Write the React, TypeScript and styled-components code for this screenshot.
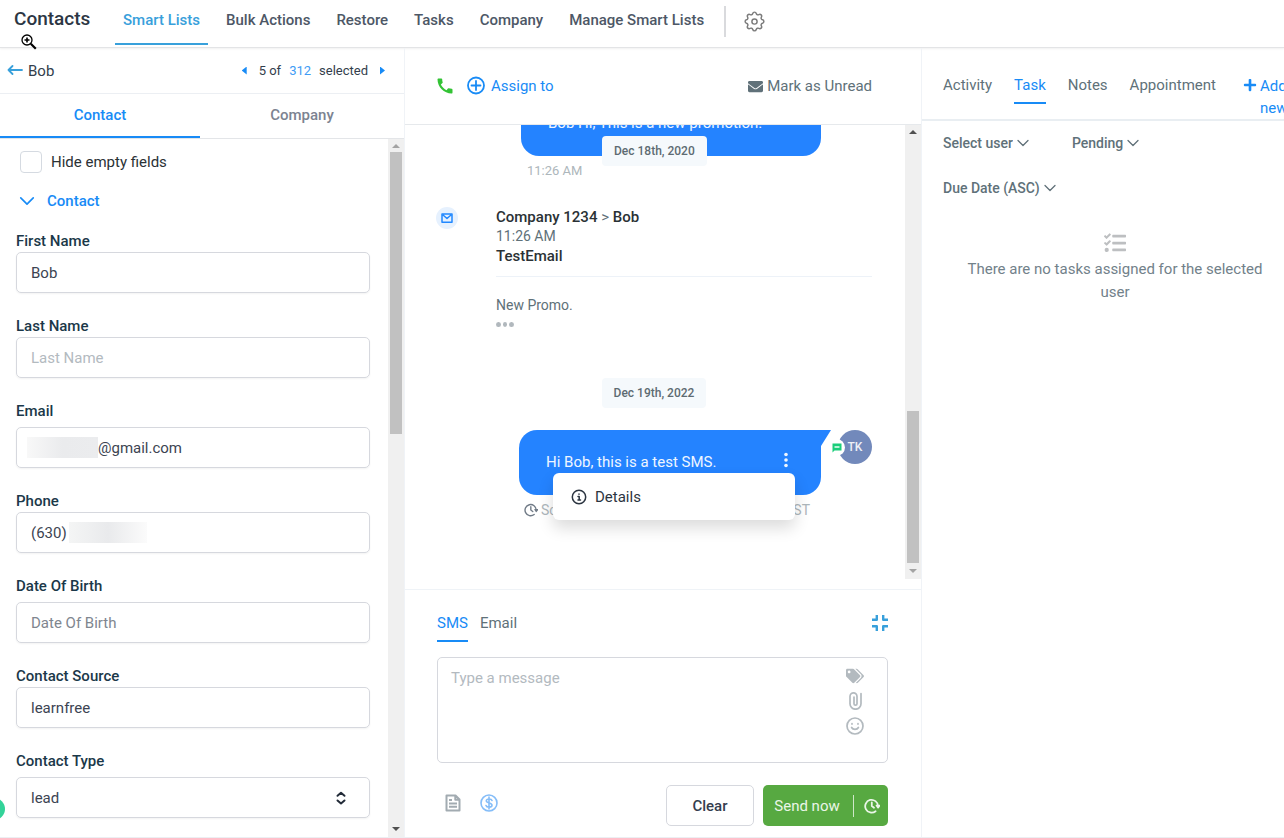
import React from "react";
import styled, { createGlobalStyle, css } from "styled-components";
import { FaEnvelope, FaPlus, FaTags, FaTasks } from "react-icons/fa";
import { MdCall } from "react-icons/md";

const blue = "#188bf6";
const sky = "#38a0db";
const slate = "#607179";
const line = "#eceff3";

const GlobalStyle = createGlobalStyle`
  *, *::before, *::after { box-sizing: border-box; }
  body {
    margin: 0;
    background: #fff;
    color: #2a3135;
    font-family: Roboto, "Liberation Sans", sans-serif;
    font-size: 15px;
    line-height: 20px;
  }
  button, input, select, textarea { font: inherit; color: inherit; }
  button { padding: 0; border: 0; background: none; cursor: pointer; }
  a { color: inherit; text-decoration: none; }
  h1, h2, p { margin: 0; }
  svg { display: block; flex: none; }
`;

const Page = styled.div`
  display: flex;
  flex-direction: column;
  height: 100vh;
  overflow: hidden;
`;

/* Top navigation */
const TopBar = styled.header`
  display: flex;
  align-items: center;
  flex: none;
  height: 48px;
  padding-left: 14px;
  border-bottom: 1px solid #e3e4e6;
  box-shadow: 0 1px 2px rgba(0, 0, 0, 0.06);
`;
const Brand = styled.h1`
  width: 101px;
  padding-bottom: 9px;
  font-size: 19px;
  line-height: 24px;
  font-weight: 500;
  color: #2c3644;
`;
const TopNav = styled.nav`
  display: flex;
  align-self: stretch;
  gap: 10px;
`;
const NavLink = styled.a<{ $active?: boolean }>`
  height: 45px;
  padding: 10px 8px 0;
  font-weight: 500;
  color: ${(p) => (p.$active ? sky : "#4d5766")};
  border-bottom: 2px solid ${(p) => (p.$active ? sky : "transparent")};
`;
const SettingsButton = styled.button`
  display: flex;
  align-items: center;
  height: 31px;
  margin: 0 0 5px 12px;
  padding-left: 16px;
  border-left: 2px solid #d9dadd;
  color: #7b7b7b;
`;

/* Columns */
const Columns = styled.main`
  display: grid;
  grid-template-columns: 404px minmax(0, 1fr) 363px;
  flex: 1;
  min-height: 0;
  border-bottom: 1px solid ${line};
`;
const Column = styled.section`
  display: flex;
  flex-direction: column;
  min-width: 0;
  min-height: 0;
  overflow: hidden;
  & + & { border-left: 1px solid #f0f3f7; }
`;

const ScrollTrack = styled.div`
  display: flex;
  flex-direction: column;
  align-items: center;
  flex: none;
  width: 16px;
  background: #f0f0f0;
`;
const Arrow = styled.i<{ $down?: boolean; $dim?: boolean }>`
  margin: ${(p) => (p.$down ? "6px 0" : "5px 0 4px")};
  border: 4px solid transparent;
  ${(p) => {
    const color = p.$dim ? "#a3a3a3" : "#505050";
    return p.$down
      ? css`border-top-color: ${color}; border-bottom: 0;`
      : css`border-bottom-color: ${color}; border-top: 0;`;
  }}
`;
const Spacer = styled.div<{ $grow: number }>`
  flex: ${(p) => p.$grow} 1 0;
`;
const Thumb = styled(Spacer)`
  width: 12px;
  background: #c1c1c1;
`;

/* Contact details */
const ContactBar = styled.div`
  display: flex;
  align-items: center;
  justify-content: space-between;
  flex: none;
  height: 46px;
  padding: 0 19px 0 7px;
  border-bottom: 1px solid ${line};
  color: #333e4c;
`;
const BackButton = styled.button`
  display: flex;
  align-items: center;
  gap: 5px;
`;
const Pager = styled.div`
  display: flex;
  align-items: center;
  font-size: 13px;
  gap: 8px;
`;
const PagerButton = styled.button<{ $next?: boolean }>`
  width: 5px;
  height: 8px;
  margin: ${(p) => (p.$next ? "0 0 0 4px" : "0 4px 0 0")};
  background: ${blue};
  clip-path: ${(p) =>
    p.$next ? "polygon(0 0, 100% 50%, 0 100%)" : "polygon(100% 0, 0 50%, 100% 100%)"};
`;
const Count = styled.span`
  color: #3f9cf5;
`;
const PanelTabs = styled.div`
  display: grid;
  grid-template-columns: 200px 1fr;
  flex: none;
  height: 45px;
  border-bottom: 1px solid #e3e5e8;
`;
const PanelTab = styled.button<{ $active?: boolean }>`
  font-weight: 500;
  color: ${(p) => (p.$active ? blue : "#7c8391")};
  border-bottom: 2px solid ${(p) => (p.$active ? blue : "transparent")};
`;
const ScrollRow = styled.div`
  display: flex;
  flex: 1;
  min-height: 0;
`;
const Fields = styled.form`
  flex: 1;
  min-width: 0;
  padding: 12px 18px 0 16px;
  overflow: hidden;
`;
const CheckRow = styled.label`
  display: flex;
  align-items: center;
  gap: 9px;
  padding-left: 4px;
  height: 21px;
`;
const CheckBox = styled.input`
  appearance: none;
  width: 22px;
  height: 22px;
  margin: 0;
  border: 1px solid #d5dae1;
  border-radius: 4px;
`;
const SectionToggle = styled.button`
  display: flex;
  align-items: center;
  gap: 12px;
  margin: 19px 0 20px 3px;
  font-weight: 500;
  color: ${blue};
`;
const Field = styled.div<{ $loose?: boolean }>`
  display: flex;
  flex-direction: column;
  gap: ${(p) => (p.$loose ? 6 : 1)}px;
  margin-bottom: 23px;
`;
const FieldLabel = styled.label`
  font-weight: 500;
  color: #1b3849;
`;
const FieldBox = styled.div`
  display: flex;
  align-items: center;
  height: 41px;
  padding: 0 14px;
  border: 1px solid #d6d8de;
  border-radius: 5px;
  box-shadow: 0 1px 2px rgba(0, 0, 0, 0.05);
  color: #3c4452;
`;
const FieldInput = styled.input<{ $tone?: string }>`
  flex: 1;
  min-width: 0;
  padding: 0;
  border: 0;
  outline: 0;
  background: none;
  &::placeholder { color: ${(p) => p.$tone ?? "#b3babf"}; opacity: 1; }
`;
const AreaCode = styled(FieldInput)`
  flex: none;
  width: 38px;
`;
const FieldSelect = styled.select`
  flex: 1;
  appearance: none;
  padding: 0;
  border: 0;
  background: none;
`;
const Redacted = styled.span<{ $end?: boolean }>`
  width: ${(p) => (p.$end ? 78 : 71)}px;
  height: 21px;
  margin-left: ${(p) => (p.$end ? 0 : -4)}px;
  background: ${(p) =>
    p.$end
      ? "linear-gradient(90deg, #f4f5f5, #e9eaec 50%, #fbfbfb)"
      : "linear-gradient(90deg, #f8f8f8, #eaebed 50%, #ebecee)"};
`;
const SortMark = styled.span`
  margin-right: 8px;
  color: #222b38;
`;

/* Conversation */
const ConversationBar = styled.div`
  display: flex;
  align-items: center;
  flex: none;
  height: 77px;
  padding: 0 49px 0 30px;
  border-bottom: 1px solid #e6e9ec;
`;
const CallButton = styled.button`
  margin-right: 11px;
  color: #33c335;
`;
const AssignButton = styled.button`
  display: flex;
  align-items: center;
  gap: 5px;
  color: ${blue};
`;
const UnreadButton = styled.button`
  display: flex;
  align-items: center;
  gap: 4px;
  margin-left: auto;
  color: ${slate};
`;
const Thread = styled.div`
  display: flex;
  flex-direction: column;
  justify-content: flex-end;
  flex: 1;
  min-width: 0;
  padding: 0 33px 59px 31px;
  overflow: hidden;
`;
const Outgoing = styled.div<{ $width: number }>`
  position: relative;
  align-self: flex-end;
  flex: none;
  width: ${(p) => p.$width}px;
  margin-right: 51px;
`;
const Bubble = styled.div`
  display: flex;
  align-items: center;
  justify-content: space-between;
  height: 65px;
  padding: 0 32px 2px 27px;
  border-radius: 18px;
  background: #2483ff;
  color: #eff6ff;
`;
const TailBubble = styled(Bubble)`
  border-top-right-radius: 0;
  &::after {
    content: "";
    position: absolute;
    top: 0;
    left: 100%;
    width: 10px;
    height: 16px;
    background: #2483ff;
    clip-path: polygon(0 0, 100% 0, 0 100%);
  }
`;
const Time = styled.time`
  font-size: 14px;
  line-height: 19px;
  color: ${slate};
`;
const SentTime = styled.time`
  display: block;
  margin: 5px 0 0 6px;
  font-size: 13px;
  color: #adb6bb;
`;
const DateChip = styled.time`
  align-self: center;
  flex: none;
  padding: 5px 12px;
  border-radius: 4px;
  background: #f5f9fc;
  font-size: 12px;
  font-weight: 500;
  color: #5d6b72;
`;
const FloatingDate = styled.div`
  position: absolute;
  top: 45px;
  left: 81px;
  display: flex;
`;
const EmailEntry = styled.article`
  display: flex;
  flex: none;
  align-items: flex-start;
  gap: 38px;
  margin: 26px 0 51px;
`;
const MailBadge = styled.span`
  display: grid;
  place-items: center;
  width: 22px;
  height: 22px;
  border-radius: 50%;
  background: #e6f1fe;
  color: #2188ff;
`;
const EmailBody = styled.div`
  flex: 1;
  display: flex;
  flex-direction: column;
  color: ${slate};
`;
const Strong = styled.strong`
  font-weight: 500;
  color: #2a3135;
`;
const EmailHead = styled.header`
  display: flex;
  flex-direction: column;
  padding-bottom: 10px;
  margin-bottom: 18px;
  border-bottom: 1px solid #edf2f8;
`;
const EmailText = styled.p`
  font-size: 14px;
`;
const MoreDots = styled.button`
  display: flex;
  gap: 2px;
  margin-top: 7px;
  width: 18px;
`;
const Dot = styled.i`
  width: 5px;
  height: 5px;
  border-radius: 50%;
  background: #b1b8bd;
`;
const SmsEntry = styled(Outgoing)`
  margin-top: 22px;
`;
const BubbleMenuButton = styled.button`
  padding-bottom: 4px;
`;
const Menu = styled.div`
  position: absolute;
  top: 43px;
  left: 34px;
  width: 242px;
  border-radius: 6px;
  background: #fff;
  box-shadow: 0 8px 16px rgba(0, 0, 0, 0.14);
`;
const MenuItem = styled.button`
  display: flex;
  align-items: center;
  gap: 8px;
  width: 100%;
  height: 47px;
  padding-left: 18px;
  color: #2b3440;
`;
const Status = styled.div`
  display: flex;
  align-items: center;
  gap: 3px;
  height: 20px;
  margin-top: 5px;
  padding: 0 11px 0 5px;
  font-size: 14px;
  color: #adb6bb;
`;
const StatusIcon = styled.span`
  color: #717b87;
`;
const Zone = styled.span`
  margin-left: auto;
`;
const Avatar = styled.div`
  position: absolute;
  top: 0;
  left: calc(100% + 17px);
  display: grid;
  place-items: center;
  width: 34px;
  height: 34px;
  border-radius: 50%;
  background: #7289bb;
  color: #eef1f7;
  font-size: 12px;
  font-weight: 500;
`;
const Channel = styled.span`
  position: absolute;
  top: 9px;
  left: -10px;
  display: grid;
  place-items: center;
  width: 17px;
  height: 17px;
  border-radius: 50%;
  background: #fff;
`;

/* Composer */
const Composer = styled.form`
  display: flex;
  flex-direction: column;
  flex: none;
  margin-top: 10px;
  padding: 23px 33px 11px 32px;
  border-top: 1px solid #eff3f7;
`;
const ComposerTop = styled.div`
  display: flex;
  gap: 12px;
`;
const LineTab = styled.button<{ $active?: boolean }>`
  height: 29px;
  padding-bottom: 8px;
  color: ${(p) => (p.$active ? blue : slate)};
  border-bottom: 2px solid ${(p) => (p.$active ? blue : "transparent")};
`;
const Shrink = styled.button`
  margin: 0 0 10px auto;
  color: ${sky};
`;
const MessageBox = styled.div`
  display: flex;
  height: 106px;
  margin: 15px 0 22px;
  border: 1px solid #d6d8de;
  border-radius: 5px;
`;
const Message = styled.textarea`
  flex: 1;
  padding: 10px 13px;
  border: 0;
  outline: 0;
  resize: none;
  background: none;
  &::placeholder { color: #b3babf; opacity: 1; }
`;
const MessageTools = styled.div`
  display: flex;
  flex-direction: column;
  align-items: center;
  gap: 7px;
  width: 34px;
  margin-right: 15px;
  padding-top: 9px;
  color: #b3babf;
`;
const ComposerActions = styled.div`
  display: flex;
  align-items: center;
  gap: 9px;
`;
const Extras = styled.div`
  display: flex;
  gap: 18px;
  margin: 0 auto 6px 7px;
  color: #a2abb1;
`;
const ClearButton = styled.button`
  width: 88px;
  height: 41px;
  border: 1px solid #d6d8de;
  border-radius: 5px;
  font-weight: 500;
  color: #343d4e;
`;
const SendGroup = styled.div`
  display: flex;
  align-items: center;
  width: 125px;
  height: 41px;
  border-radius: 5px;
  background: #57a941;
  color: #eaf6e7;
`;
const SendButton = styled.button`
  width: 91px;
  height: 22px;
  padding-right: 2px;
  border-right: 1px solid #cfe7c9;
`;
const ScheduleButton = styled.button`
  margin-left: 10px;
`;

/* Tasks */
const TaskTabs = styled.div`
  display: flex;
  align-items: flex-start;
  flex: none;
  gap: 22px;
  height: 73px;
  padding: 27px 0 0 21px;
  border-bottom: 2px solid #e9eef2;
`;
const AddButton = styled.button`
  display: flex;
  flex: none;
  gap: 3px;
  margin-left: 5px;
  color: ${blue};
  text-align: left;
  line-height: 22px;
`;
const AddIcon = styled.span`
  padding-top: 3px;
`;
const AddLabel = styled.span`
  width: 30px;
`;
const Filters = styled.div`
  display: flex;
  flex-wrap: wrap;
  gap: 25px 43px;
  padding: 12px 21px 0;
  color: ${slate};
`;
const Filter = styled.label`
  display: flex;
  align-items: center;
  gap: 4px;
`;
const FilterSelect = styled.select`
  appearance: none;
  field-sizing: content;
  height: 20px;
  padding: 0;
  border: 0;
  background: none;
  font-size: 14px;
  font-weight: 500;
`;
const Empty = styled.div`
  display: flex;
  flex-direction: column;
  align-items: center;
  gap: 4px;
  margin: 34px 14px 0 38px;
  text-align: center;
  line-height: 23px;
  color: #72818a;
`;

/* Overlays */
const HelpDot = styled.button`
  position: fixed;
  left: -17px;
  bottom: 18px;
  width: 22px;
  height: 22px;
  border-radius: 50%;
  background: #33d399;
`;
const Lens = styled.svg`
  position: absolute;
  top: 33px;
  left: 20px;
`;

const Chevron = ({ w = 12, stroke = 1.3 }: { w?: number; stroke?: number }) => (
  <svg width={w} height={w / 2 + 2} viewBox="0 0 12 8" fill="none" stroke="currentColor" strokeWidth={stroke} strokeLinecap="round" strokeLinejoin="round">
    <path d="M1 1.5 6 6.5 11 1.5" />
  </svg>
);

const Clock = ({ size, stroke }: { size: number; stroke: number }) => (
  <svg width={size} height={size} viewBox="0 0 16 16" fill="none" stroke="currentColor" strokeWidth={stroke} strokeLinecap="round" strokeLinejoin="round">
    <path d="M11.6 13.2A6.4 6.4 0 1 1 14 8" />
    <path d="M7.8 4.3V8l2.2 1.7" />
    <path d="M12.6 7.6h3L14 9.6z" fill="currentColor" />
  </svg>
);

type FieldProps = {
  id: string;
  label: string;
  value?: string;
  loose?: boolean;
  tone?: string;
  children?: React.ReactNode;
};
const TextField = ({ id, label, value, loose, tone, children }: FieldProps) => (
  <Field $loose={loose}>
    <FieldLabel htmlFor={id}>{label}</FieldLabel>
    <FieldBox>
      {children ?? <FieldInput id={id} defaultValue={value} placeholder={value ? undefined : label} $tone={tone} />}
    </FieldBox>
  </Field>
);

const TaskFilter = ({ label }: { label: string }) => (
  <Filter>
    <FilterSelect aria-label={label}>
      <option>{label}</option>
    </FilterSelect>
    <Chevron />
  </Filter>
);

const navItems = ["Smart Lists", "Bulk Actions", "Restore", "Tasks", "Company", "Manage Smart Lists"];
const taskTabs = ["Activity", "Task", "Notes", "Appointment"];

export default function App() {
  return (
    <Page>
      <GlobalStyle />
      <TopBar>
        <Brand>Contacts</Brand>
        <TopNav>
          {navItems.map((item, i) => (
            <NavLink key={item} href="#" $active={i === 0}>{item}</NavLink>
          ))}
        </TopNav>
        <SettingsButton aria-label="Settings">
          <svg width="25" height="25" viewBox="0 0 24 24" fill="none" stroke="currentColor" strokeWidth="1.4" strokeLinejoin="round">
            <path d="M10.325 4.317c.426-1.756 2.924-1.756 3.35 0a1.724 1.724 0 0 0 2.573 1.066c1.543-.94 3.31.826 2.37 2.37a1.724 1.724 0 0 0 1.065 2.572c1.756.426 1.756 2.924 0 3.35a1.724 1.724 0 0 0-1.066 2.573c.94 1.543-.826 3.31-2.37 2.37a1.724 1.724 0 0 0-2.572 1.065c-.426 1.756-2.924 1.756-3.35 0a1.724 1.724 0 0 0-2.573-1.066c-1.543.94-3.31-.826-2.37-2.37a1.724 1.724 0 0 0-1.065-2.572c-1.756-.426-1.756-2.924 0-3.35a1.724 1.724 0 0 0 1.066-2.573c-.94-1.543.826-3.31 2.37-2.37.996.608 2.296.07 2.572-1.065z" />
            <circle cx="12" cy="12" r="2.5" />
          </svg>
        </SettingsButton>
      </TopBar>

      <Columns>
        <Column>
          <ContactBar>
            <BackButton>
              <svg width="16" height="12" viewBox="0 0 16 12" fill="none" stroke={sky} strokeWidth="1.8" strokeLinecap="round" strokeLinejoin="round">
                <path d="M15 5H1.5M5.5 1l-4 4 4 4" />
              </svg>
              Bob
            </BackButton>
            <Pager>
              <PagerButton aria-label="Previous contact" />
              <span>5 of</span>
              <Count>312</Count>
              <span>selected</span>
              <PagerButton $next aria-label="Next contact" />
            </Pager>
          </ContactBar>
          <PanelTabs>
            <PanelTab $active>Contact</PanelTab>
            <PanelTab>Company</PanelTab>
          </PanelTabs>
          <ScrollRow>
            <Fields>
              <CheckRow>
                <CheckBox type="checkbox" />
                Hide empty fields
              </CheckRow>
              <SectionToggle type="button">
                <Chevron w={16} stroke={1.3} />
                Contact
              </SectionToggle>
              <TextField id="first" label="First Name" value="Bob" />
              <TextField id="last" label="Last Name" />
              <TextField id="email" label="Email" loose>
                <Redacted />
                <FieldInput id="email" defaultValue="@gmail.com" />
              </TextField>
              <TextField id="phone" label="Phone">
                <AreaCode id="phone" defaultValue="(630)" />
                <Redacted $end />
              </TextField>
              <TextField id="birth" label="Date Of Birth" loose tone="#80868f" />
              <TextField id="source" label="Contact Source" value="learnfree" />
              <TextField id="type" label="Contact Type" loose>
                <FieldSelect id="type">
                  <option>lead</option>
                </FieldSelect>
                <SortMark>
                  <svg width="12" height="14" viewBox="0 0 12 14" fill="none" stroke="currentColor" strokeWidth="2" strokeLinecap="round" strokeLinejoin="round">
                    <path d="M2.5 4.8 6 1.8l3.5 3M2.5 9.5 6 12.5l3.5-3" />
                  </svg>
                </SortMark>
              </TextField>
            </Fields>
            <ScrollTrack>
              <Arrow $dim />
              <Thumb $grow={282} />
              <Spacer $grow={388} />
              <Arrow $down />
            </ScrollTrack>
          </ScrollRow>
        </Column>

        <Column>
          <ConversationBar>
            <CallButton aria-label="Call">
              <MdCall size={20} />
            </CallButton>
            <AssignButton>
              <svg width="20" height="20" viewBox="0 0 20 20" fill="none" stroke="currentColor" strokeWidth="1.8" strokeLinecap="round">
                <circle cx="10" cy="9.5" r="8" />
                <path d="M10 5v9M5.5 9.5h9" />
              </svg>
              Assign to
            </AssignButton>
            <UnreadButton>
              <FaEnvelope size={15} />
              Mark as Unread
            </UnreadButton>
          </ConversationBar>
          <ScrollRow>
            <Thread>
              <Outgoing $width={300}>
                <Bubble>Bob Hi, This is a new promotion.</Bubble>
                <FloatingDate>
                  <DateChip>Dec 18th, 2020</DateChip>
                </FloatingDate>
                <SentTime>11:26 AM</SentTime>
              </Outgoing>
              <EmailEntry>
                <MailBadge>
                  <svg width="12" height="10" viewBox="0 0 12 10" fill="none" stroke="currentColor" strokeWidth="1.5" strokeLinejoin="round">
                    <path d="M1 1h10v8.2H1zM2 2l4 3.5L10 2" />
                  </svg>
                </MailBadge>
                <EmailBody>
                  <EmailHead>
                    <span><Strong>Company 1234</Strong> &gt; <Strong>Bob</Strong></span>
                    <Time>11:26 AM</Time>
                    <Strong>TestEmail</Strong>
                  </EmailHead>
                  <EmailText>New Promo.</EmailText>
                  <MoreDots aria-label="Show more">
                    <Dot />
                    <Dot />
                    <Dot />
                  </MoreDots>
                </EmailBody>
              </EmailEntry>
              <DateChip>Dec 19th, 2022</DateChip>
              <SmsEntry $width={302}>
                <TailBubble>
                  Hi Bob, this is a test SMS.
                  <BubbleMenuButton aria-label="Message options">
                    <svg width="6" height="16" viewBox="0 0 6 16" fill="currentColor">
                      <circle cx="3" cy="2.5" r="1.8" />
                      <circle cx="3" cy="8" r="1.8" />
                      <circle cx="3" cy="13.5" r="1.8" />
                    </svg>
                  </BubbleMenuButton>
                </TailBubble>
                <Status>
                  <StatusIcon>
                    <Clock size={14} stroke={1.6} />
                  </StatusIcon>
                  <span>Scheduled</span>
                  <Zone>EST</Zone>
                </Status>
                <Menu>
                  <MenuItem>
                    <svg width="16" height="16" viewBox="0 0 16 16" fill="none" stroke="currentColor" strokeWidth="1.5" strokeLinecap="round" strokeLinejoin="round">
                      <circle cx="8" cy="8" r="6.7" />
                      <path d="M7 7.5h1.2v3.2M7 10.9h2.5M8 5v.2" />
                    </svg>
                    Details
                  </MenuItem>
                </Menu>
                <Avatar>
                  TK
                  <Channel>
                    <svg width="10" height="10" viewBox="0 0 9 10">
                      <path d="M0 .5h9v7H2L0 9.5z" fill="#1bce7b" />
                      <path d="M2 3h5v2H2z" fill="#b9f2d7" />
                    </svg>
                  </Channel>
                </Avatar>
              </SmsEntry>
            </Thread>
            <ScrollTrack>
              <Arrow />
              <Spacer $grow={271} />
              <Thumb $grow={151} />
              <Arrow $down $dim />
            </ScrollTrack>
          </ScrollRow>
          <Composer>
            <ComposerTop>
              <LineTab type="button" $active>SMS</LineTab>
              <LineTab type="button">Email</LineTab>
              <Shrink type="button" aria-label="Collapse">
                <svg width="16" height="16" viewBox="0 0 16 16" fill="none" stroke="currentColor" strokeWidth="2.4" strokeLinejoin="round">
                  <path d="M4.8 0v4.8H0M11.2 0v4.8H16M4.8 16v-4.8H0M11.2 16v-4.8H16" />
                </svg>
              </Shrink>
            </ComposerTop>
            <MessageBox>
              <Message aria-label="Message" placeholder="Type a message" />
              <MessageTools>
                <button type="button" aria-label="Tags"><FaTags size={18} /></button>
                <button type="button" aria-label="Attach">
                  <svg width="13" height="18" viewBox="0 0 13 18" fill="none" stroke="currentColor" strokeWidth="1.7" strokeLinecap="round">
                    <path d="M12 1.5v10.2a5.5 5.5 0 0 1-11 0V4.400a3.500 3.500 0 0 1 7 0v7.300a1.500 1.500 0 0 1-3 0V5" />
                  </svg>
                </button>
                <button type="button" aria-label="Emoji">
                  <svg width="18" height="18" viewBox="0 0 18 18" fill="none" stroke="currentColor" strokeWidth="1.7" strokeLinecap="round">
                    <circle cx="9" cy="9" r="8" />
                    <path d="M5.6 10.5c1.3 2.6 5.5 2.6 6.8 0M6 6.7v.4M12 6.7v.4" />
                  </svg>
                </button>
              </MessageTools>
            </MessageBox>
            <ComposerActions>
              <Extras>
                <button type="button" aria-label="Templates">
                  <svg width="18" height="18" viewBox="0 0 18 18" fill="none" stroke="currentColor" strokeWidth="2" strokeLinejoin="round">
                    <path d="M2.5 1.5h9l4 4v11h-13zM11.3 1.7v4h4M5 6h3M5 9.5h8M5 12.8h8" />
                  </svg>
                </button>
                <button type="button" aria-label="Request payment">
                  <svg width="18" height="18" viewBox="0 0 18 18" fill="none" stroke="#85bdf8" strokeWidth="1.6" strokeLinecap="round">
                    <circle cx="9" cy="9" r="8" />
                    <path d="M12 6.5C11.4 4.5 6.5 4.3 6.3 6.8c0 2.7 5.7 1.6 5.7 4.4 0 2.6-5.3 2.5-6 .3M9 3v12" />
                  </svg>
                </button>
              </Extras>
              <ClearButton type="button">Clear</ClearButton>
              <SendGroup>
                <SendButton type="button">Send now</SendButton>
                <ScheduleButton type="button" aria-label="Schedule send">
                  <Clock size={16} stroke={1.8} />
                </ScheduleButton>
              </SendGroup>
            </ComposerActions>
          </Composer>
        </Column>

        <Column>
          <TaskTabs>
            {taskTabs.map((tab) => (
              <LineTab key={tab} $active={tab === "Task"}>{tab}</LineTab>
            ))}
            <AddButton>
              <AddIcon><FaPlus size={14} /></AddIcon>
              <AddLabel>Add new</AddLabel>
            </AddButton>
          </TaskTabs>
          <Filters>
            <TaskFilter label="Select user" />
            <TaskFilter label="Pending" />
            <TaskFilter label="Due Date (ASC)" />
          </Filters>
          <Empty>
            <FaTasks size={22} color="#bdbfc1" />
            <p>There are no tasks assigned for the selected user</p>
          </Empty>
        </Column>
      </Columns>

      <HelpDot aria-label="Help" />
      <Lens width="18" height="18" viewBox="0 0 18 18" fill="none" stroke="#000">
        <circle cx="7" cy="7" r="5" strokeWidth="1.3" />
        <path d="M7 4.5v5M4.5 7h5" strokeWidth="1.6" />
        <path d="M10.8 10.8l5 5" strokeWidth="2.2" />
      </Lens>
    </Page>
  );
}
